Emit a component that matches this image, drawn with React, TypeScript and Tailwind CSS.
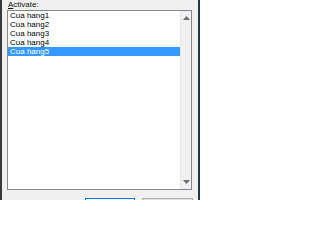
const stores = ["Cua hang1", "Cua hang2", "Cua hang3", "Cua hang4", "Cua hang5"];

function Arrow({ up }: { up: boolean }) {
  return (
    <svg width="7" height="4" viewBox="0 0 7 4" className="block">
      <path d={up ? "M0 4 L3.5 0 L7 4 Z" : "M0 0 L3.5 4 L7 0 Z"} fill="#6d6d6d" />
    </svg>
  );
}

export default function App() {
  return (
    <div className="w-[200px] h-[200px] overflow-hidden bg-[#f0f0f0] border-l-2 border-r-2 border-l-[#3a3a3a] border-r-[#1d3b45] font-['Liberation_Sans',Arial,sans-serif]">
      <div className="flex flex-col pl-[5px]">
        <div className="h-[10px] leading-[9px] text-[8px] text-[#111] pl-[1px]">
          <span className="underline">A</span>ctivate:
        </div>
        <div className="flex w-[185px] h-[180px] border border-[#828790] bg-white">
          <div className="flex-1 flex flex-col">
            {stores.map((s, i) => (
              <div
                key={s}
                className={
                  i === 4
                    ? "h-[9px] leading-[9px] text-[8px] pl-[2px] bg-[#3399ff] text-white"
                    : "h-[9px] leading-[9px] text-[8px] pl-[2px] text-black"
                }
              >
                {s}
              </div>
            ))}
          </div>
          <div className="w-[11px] bg-[#f0f0f0] border-l border-[#e6e6e6] flex flex-col items-center justify-between py-[5px]">
            <Arrow up />
            <Arrow up={false} />
          </div>
        </div>
        <div className="flex mt-[8px] ml-[78px] gap-[7px]">
          <div className="w-[50px] h-[20px] border border-[#0078d7] bg-[#e5f1fb]" />
          <div className="w-[51px] h-[20px] border border-[#adadad] bg-[#e1e1e1]" />
        </div>
      </div>
    </div>
  );
}
